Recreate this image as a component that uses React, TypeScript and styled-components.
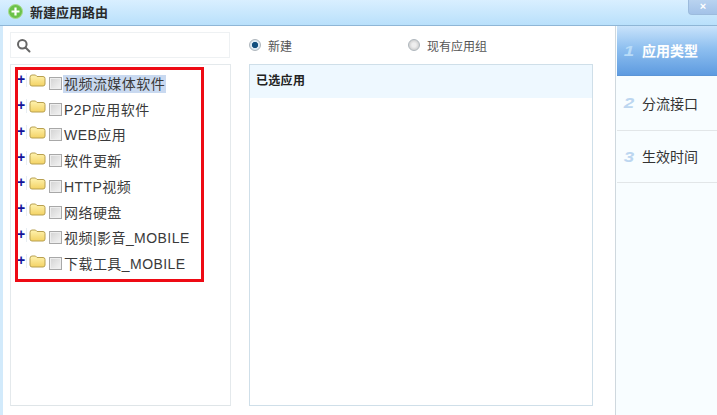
import React from "react";
import styled, { createGlobalStyle } from "styled-components";

const Global = createGlobalStyle`
  html, body { margin: 0; padding: 0; background: #fff; }
  body { font-family: "Liberation Sans", "Noto Sans CJK SC", sans-serif; }
`;
const Dialog = styled.div`
  position: relative; width: 717px; height: 415px; overflow: hidden;
  display: flex; flex-direction: column; background: #fff;
`;
const TitleBar = styled.div`
  height: 26px; flex: none; display: flex; align-items: center; gap: 7px; padding: 0 0 3px 8px; box-sizing: border-box;
  background: linear-gradient(#d9efff, #b9e0fb); border-bottom: 1px solid #8fb6d6;
`;
const TitleText = styled.div`
  font: bold 13px "Noto Sans CJK SC", sans-serif; color: #2b2b2b;
`;
const Close = styled.div`
  margin-left: auto; width: 29px; height: 15px; margin-top: -8px; box-sizing: border-box;
  background: linear-gradient(#b9d3f0, #a3c2e8); border: 1px solid #9cbbdd; border-top: none; border-right: none;
  border-radius: 0 0 0 4px; color: #fff; font: bold 11px/13px "Liberation Sans", sans-serif; text-align: center;
`;
const Body = styled.div`
  flex: 1; display: flex; min-height: 0; border-left: 3px solid #d2eafb;
`;
const LeftColumn = styled.div`
  width: 221px; flex: none; margin-left: 7px; padding: 6px 0 9px; display: flex; flex-direction: column; gap: 6px;
`;
const SearchBox = styled.div`
  height: 26px; flex: none; box-sizing: border-box; border: 1px solid #eef1f3; background: #fff;
  display: flex; align-items: center; padding-left: 5px; margin-right: 1px;
`;
const TreePanel = styled.div`
  flex: 1; border: 1px solid #e4e9ec; border-bottom-color: #dfe5e8; padding: 6px 0 0 6px; box-sizing: border-box;
`;
const Row = styled.div`
  height: 25.75px; display: flex; align-items: center; font-size: 14px; color: #3a3a3a; letter-spacing: 0.45px;
`;
const Expander = styled.span`
  width: 9px; height: 14px; flex: none; margin: -7px 2px 0 0; color: #14149a;
  font: bold 14px/13px "Liberation Sans", sans-serif; text-align: left; border-right: 1px solid #e8eef3;
`;
const FolderIcon = styled.svg`
  width: 17px; height: 13px; flex: none; margin: -6px 3px 0 0;
`;
const Check = styled.span`
  width: 13px; height: 13px; flex: none; margin: -1px 1px 0 0; box-sizing: border-box;
  border: 1px solid #a8a8a8; background: linear-gradient(135deg, #d2d2d2, #f4f4f4); box-shadow: inset 0 0 0 1px #eee;
`;
const Label = styled.span<{ $selected?: boolean }>`
  padding: 0 1px; line-height: 18px; background: ${(p) => (p.$selected ? "#c9d9f0" : "transparent")};
`;
const Annotation = styled.div`
  position: absolute; left: 15px; top: 67px; width: 189px; height: 215px; box-sizing: border-box;
  border: 3px solid #ee0a14; pointer-events: none;
`;
const Center = styled.div`
  flex: 1; padding: 6px 0 9px 18px; display: flex; flex-direction: column; min-width: 0;
`;
const RadioRow = styled.div`
  height: 26px; flex: none; display: flex; align-items: center; font: 12px "Noto Sans CJK SC", sans-serif; color: #555; margin-bottom: 6px;
`;
const RadioOption = styled.label<{ $w: number }>`
  width: ${(p) => p.$w}px; display: flex; align-items: center; gap: 7px; box-sizing: border-box;
`;
const RadioDot = styled.span<{ $on?: boolean }>`
  width: 12px; height: 12px; border-radius: 50%; box-sizing: border-box; border: 1px solid #aeb6bc; flex: none;
  background: ${(p) => (p.$on ? "radial-gradient(circle, #14507f 0 2.8px, #dfeaf3 3.4px)" : "radial-gradient(circle, #eee 0 2px, #d5d5d5 4.5px)")};
`;
const SelectedPanel = styled.div`
  width: 344px; flex: 1; box-sizing: border-box; border: 1px solid #cfdfe9; background: #fff;
`;
const PanelHeader = styled.div`
  height: 33px; background: #eef8ff; padding: 6px 0 0 6px; box-sizing: border-box;
  font: bold 12px/18px "Noto Sans CJK SC", sans-serif; color: #222; letter-spacing: .3px;
`;
const Sidebar = styled.div`
  width: 102px; flex: none; box-sizing: border-box; border-left: 1px solid #cfd8de; padding-left: 1px; background: #f8fdff; display: flex; flex-direction: column;
`;
const Step = styled.div<{ $active?: boolean; $h: number }>`
  height: ${(p) => p.$h}px; flex: none; box-sizing: border-box; display: flex; align-items: center; gap: 6px; padding: 0 0 1px 5px;
  font-size: 14px; font-weight: ${(p) => (p.$active ? 700 : 400)}; color: ${(p) => (p.$active ? "#fff" : "#333")};
  text-shadow: ${(p) => (p.$active ? "0 0 2px #9cc4ec" : "none")};
  background: ${(p) => (p.$active ? "linear-gradient(#c9e3fb 0%, #8fc0f0 45%, #5e9be0 100%)" : "transparent")};
  border-bottom: 1px solid ${(p) => (p.$active ? "#5b95d6" : "#e2e6e8")};
`;
const StepNum = styled.span<{ $active?: boolean }>`
  width: 14px; flex: none; text-align: center; font: italic 900 15px "Liberation Sans", sans-serif;
  display: inline-block; transform: scaleX(1.25);
  color: ${(p) => (p.$active ? "#b9dcf8" : "#bcd6f0")}; text-shadow: none;
`;

const Folder = () => (
  <FolderIcon viewBox="0 0 17 13">
    <defs>
      <linearGradient id="folderFill" x1="0" y1="0" x2="0" y2="1">
        <stop offset="0" stopColor="#fff3b0" />
        <stop offset="1" stopColor="#f3d264" />
      </linearGradient>
    </defs>
    <path d="M1 3.5 Q1 1 3 1 H6.5 L8 2.5 H14 Q16 2.5 16 4.5 V10 Q16 12 14 12 H3 Q1 12 1 10 Z" fill="url(#folderFill)" stroke="#b8a050" strokeWidth="1" />
  </FolderIcon>
);

const items = ["视频流媒体软件", "P2P应用软件", "WEB应用", "软件更新", "HTTP视频", "网络硬盘", "视频|影音_MOBILE", "下载工具_MOBILE"];

export default function App() {
  return (
    <Dialog>
      <Global />
      <TitleBar>
        <svg width="15" height="15" viewBox="0 0 15 15">
          <circle cx="7.5" cy="7.5" r="7" fill="#6cc24a" stroke="#a8dc90" />
          <path d="M7.5 3.5v8M3.5 7.5h8" stroke="#fff" strokeWidth="2.2" />
        </svg>
        <TitleText>新建应用路由</TitleText>
        <Close>×</Close>
      </TitleBar>
      <Body>
        <LeftColumn>
          <SearchBox>
            <svg width="15" height="15" viewBox="0 0 15 15" fill="none" stroke="#666" strokeWidth="2">
              <circle cx="6.3" cy="6.3" r="4.3" />
              <path d="M9.5 9.5l4 4" strokeLinecap="round" />
            </svg>
          </SearchBox>
          <TreePanel>
            {items.map((t, i) => (
              <Row key={t}>
                <Expander>+</Expander>
                <Folder />
                <Check />
                <Label $selected={i === 0}>{t}</Label>
              </Row>
            ))}
          </TreePanel>
        </LeftColumn>
        <Center>
          <RadioRow>
            <RadioOption $w={159}><RadioDot $on />新建</RadioOption>
            <RadioOption $w={120}><RadioDot />现有应用组</RadioOption>
          </RadioRow>
          <SelectedPanel>
            <PanelHeader>已选应用</PanelHeader>
          </SelectedPanel>
        </Center>
        <Sidebar>
          <Step $active $h={50}><StepNum $active>1</StepNum>应用类型</Step>
          <Step $h={55}><StepNum>2</StepNum>分流接口</Step>
          <Step $h={52}><StepNum>3</StepNum>生效时间</Step>
        </Sidebar>
      </Body>
      <Annotation />
    </Dialog>
  );
}
